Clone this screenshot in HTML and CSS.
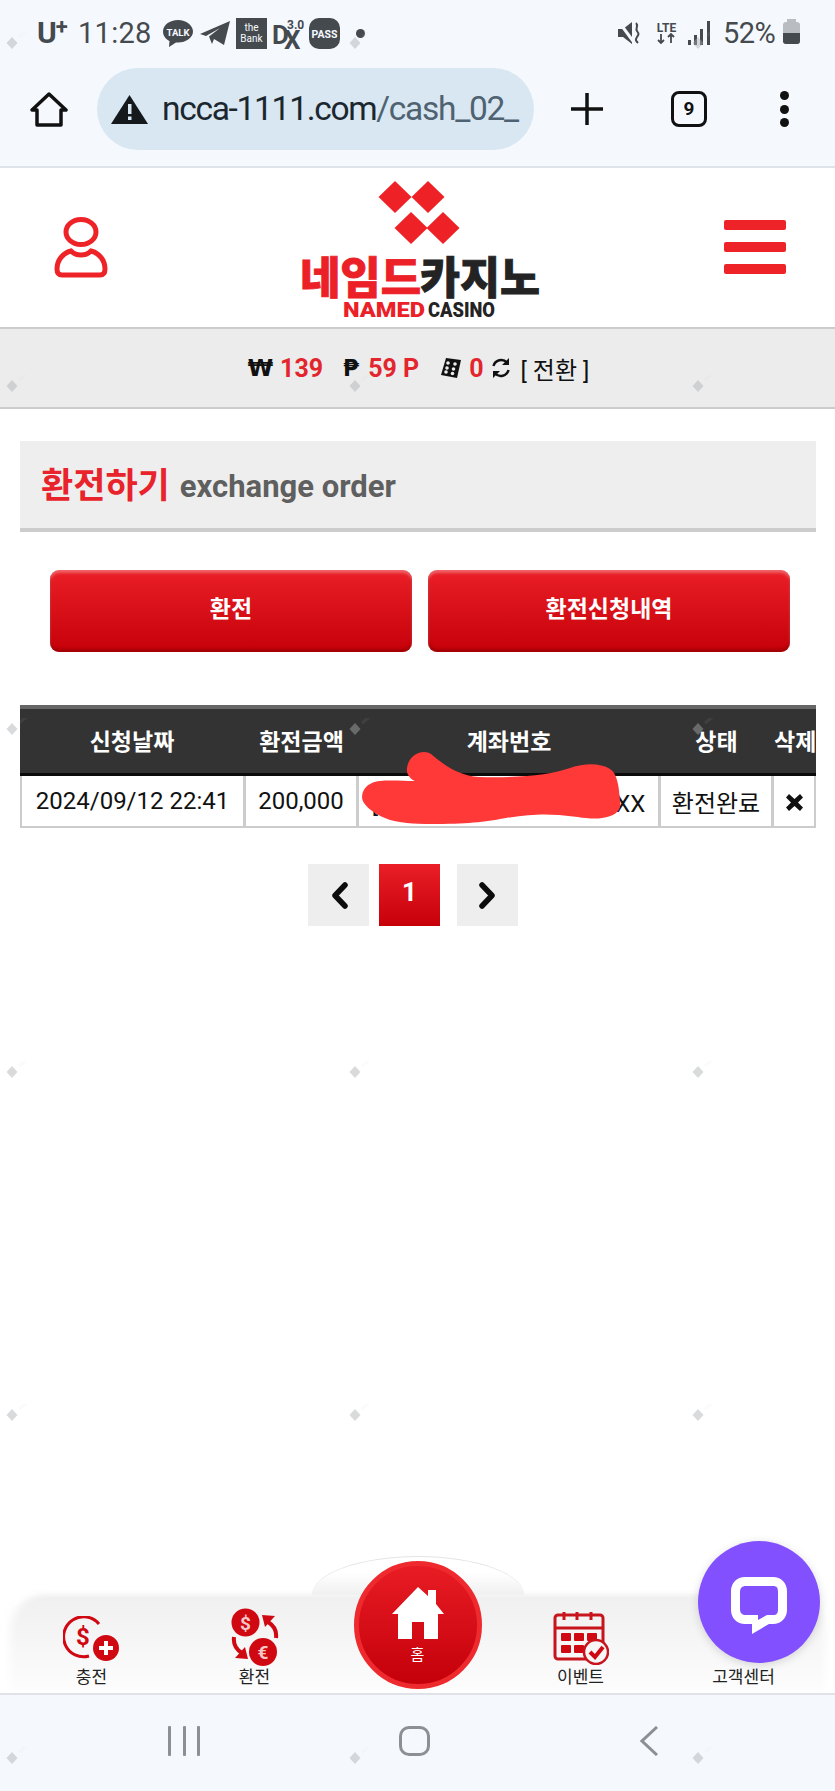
FILE: index.html
```html
<!DOCTYPE html>
<html lang="ko">
<head>
<meta charset="utf-8">
<title>환전하기 - 네임드카지노</title>
<link rel="stylesheet" href="styles.css">
</head>
<body>
<div class="page">
  <div class="chrome">
    <div class="status">
      <div class="status-left">
        <span class="carrier">U<sup>+</sup></span>
        <span class="clock">11:28</span>
        <svg class="ico-talk" viewBox="0 0 30 27"><path d="M15 0C6.700 0 0 5 0 11.500c0 4 2.500 7.500 6.500 9.500L6 27l7-4.600c.7.100 1.300.100 2 .100 8.300 0 15-5 15-11S23.300 0 15 0z"/><text x="15" y="15.500" class="t-talk">TALK</text></svg>
        <svg class="ico-tg" viewBox="0 0 30 24"><path d="M0 13 30 0 24 24 14 18 12 23 9 15.500 20 7 6 15z"/></svg>
        <svg class="ico-bank" viewBox="0 0 31 31"><rect width="31" height="31"/><text x="15.500" y="13" class="t-bank">the</text><text x="15.500" y="24" class="t-bank">Bank</text></svg>
        <svg class="ico-dx" viewBox="0 0 33 31"><text x="0" y="26" class="t-dx">D</text><text x="12" y="30.500" class="t-dx">X</text><text x="15" y="11" class="t-ver">3.0</text></svg>
        <svg class="ico-pass" viewBox="0 0 31 31"><rect width="31" height="31" rx="10"/><text x="15.500" y="20" class="t-pass">PASS</text></svg>
        <span class="status-dot"></span>
      </div>
      <div class="status-right">
        <svg class="ico-mute" viewBox="0 0 24 24"><path d="M0 8h5l9-7v22l-9-7H0z"/><path d="M1 1l14 19" class="cut"/><path d="M18 2c3 3-1 5 1 8s2 3 0 6-1 4 1 6" class="wave"/></svg>
        <svg class="ico-lte" viewBox="0 0 23 24"><text x="11.500" y="11" class="t-lte">LTE</text><path d="M6 13v9M3 19l3 3 3-3M16 22v-9M13 16l3-3 3 3" class="arrows"/></svg>
        <svg class="ico-signal" viewBox="0 0 22 24"><rect x="0" y="19" width="3" height="5"/><rect x="6" y="14" width="3" height="10"/><rect x="12" y="8" width="3" height="16"/><rect x="19" y="0" width="3" height="24"/></svg>
        <span class="battery-pct">52%</span>
        <span class="battery"><i></i></span>
      </div>
    </div>
    <div class="toolbar">
      <svg class="ico-home" viewBox="0 0 38 35"><path d="M19 2 36 18h-5v15H7V18H2z"/></svg>
      <div class="omnibox">
        <svg class="ico-warn" viewBox="0 0 37 29"><path d="M18.500 0 37 29H0z"/><rect x="17" y="9" width="3.500" height="10" class="mark"/><rect x="17" y="21.500" width="3.500" height="3.500" class="mark"/></svg>
        <span class="url">ncca-1111.com<span class="url-path">/cash_02_</span></span>
      </div>
      <svg class="ico-plus" viewBox="0 0 32 32"><path d="M16 0v32M0 16h32"/></svg>
      <span class="tabs">9</span>
      <span class="kebab"><i></i><i></i><i></i></span>
    </div>
  </div>

  <header class="site-head">
    <svg class="ico-user" viewBox="0 0 54 61"><ellipse cx="27" cy="15" rx="15" ry="12.500"/><path d="M17 34C9 36 3 43 3 52c0 4 2 6 5 6h38c3 0 5-2 5-6 0-9-6-16-14-18-3 3-6 4-10 4s-7-1-10-4z"/></svg>
    <svg class="logo" viewBox="0 0 240 138">
      <g class="logo-marks">
        <path d="M95 0l16.500 16-16.500 16-16.500-16z"/><path d="M128 0l16.500 16-16.500 16-16.500-16z"/>
        <path d="M111 31l16.500 16-16.500 16-16.500-16z"/><path d="M143 31l16.500 16-16.500 16-16.500-16z"/>
      </g>
      <text x="0" y="113" class="logo-ko red" textLength="121" lengthAdjust="spacingAndGlyphs">네임드</text>
      <text x="120" y="113" class="logo-ko dark" textLength="120" lengthAdjust="spacingAndGlyphs">카지노</text>
      <text x="43" y="136" class="logo-en red" textLength="82" lengthAdjust="spacingAndGlyphs">NAMED</text>
      <text x="128" y="136" class="logo-en dark" textLength="67" lengthAdjust="spacingAndGlyphs">CASINO</text>
    </svg>
    <div class="burger"><i></i><i></i><i></i></div>
  </header>

  <div class="wallet">
    <span class="cur">₩</span><b class="amt">139</b>
    <span class="cur cur-gap">₱</span><b class="amt">59 P</b>
    <svg class="ico-dice" viewBox="0 0 22 22"><path d="M6 1 21 3 17 21 1 18z"/><g class="pips"><circle cx="8" cy="6" r="1.800"/><circle cx="15" cy="7" r="1.800"/><circle cx="7" cy="11" r="1.800"/><circle cx="13.500" cy="12" r="1.800"/><circle cx="6" cy="15" r="1.800"/><circle cx="12.500" cy="16.500" r="1.800"/></g></svg>
    <b class="amt">0</b>
    <svg class="ico-sync" viewBox="0 0 20 20"><path d="M2.500 8A8 8 0 0 1 16 4.500"/><path d="M17.500 12A8 8 0 0 1 4 15.500"/><path d="M18 0v7h-7zM2 20v-7h7z" class="solid"/></svg>
    <span class="swap">[ 전환 ]</span>
  </div>

  <main class="content">
    <h1 class="page-title"><span class="title-ko">환전하기</span> <span class="title-en">exchange order</span></h1>

    <div class="actions">
      <a class="btn">환전</a>
      <a class="btn">환전신청내역</a>
    </div>

    <div class="history">
      <table class="history-table">
        <colgroup><col class="c-date"><col class="c-amount"><col class="c-account"><col class="c-state"><col class="c-del"></colgroup>
        <thead>
          <tr><th>신청날짜</th><th>환전금액</th><th>계좌번호</th><th>상태</th><th>삭제</th></tr>
        </thead>
        <tbody>
          <tr>
            <td>2024/09/12 22:41</td>
            <td>200,000</td>
            <td>[은행] XXXXXXXXXXXXXX</td>
            <td>환전완료</td>
            <td><svg class="ico-x" viewBox="0 0 17 17"><path d="M3 0l5.500 5L14 0l3 3.500L12 8.500l5 5-3 3.500-5.500-5L3 17l-3-3.500 5-5-5-5z"/></svg></td>
          </tr>
        </tbody>
      </table>
      <svg class="scribble" viewBox="360 749 265 78"><path d="M431 753C424 748 409 752 407 767C406 773 410 778 415 780C400 780 380 778 372 782C362 786 360 797 364 802C368 808 378 815 390 819C405 823 420 823 437 823C470 823 490 820 506 817C530 813 545 813 559 814C575 815 590 819 602 817C615 815 622 810 620 800C619 785 617 772 610 768C600 762 585 762 570 767C550 774 520 777 479 776C460 775 445 765 431 753Z"/></svg>
    </div>

    <nav class="pager">
      <a class="page-btn"><svg class="chev" viewBox="0 0 18 27"><path d="M15 3 5 13.500 15 24"/></svg></a>
      <a class="page-btn current">1</a>
      <a class="page-btn"><svg class="chev" viewBox="0 0 18 27"><path d="M3 3l10 10.500L3 24"/></svg></a>
    </nav>
  </main>

  <footer class="dock">
    <a class="dock-item">
      <svg class="ico-charge" viewBox="0 0 57 45"><path d="M36 8A20 20 0 1 0 26 40" class="ring"/><text x="20" y="29" class="t-money">$</text><circle cx="43" cy="32" r="13"/><path d="M43 25v14M36 32h14" class="plus"/></svg>
      <span>충전</span>
    </a>
    <a class="dock-item">
      <svg class="ico-exchange" viewBox="0 0 48 58"><circle cx="14.500" cy="14.500" r="14"/><text x="14.500" y="21.500" class="t-coin">$</text><circle cx="32" cy="44" r="14"/><text x="32" y="51" class="t-coin">€</text><path d="M45 30C46 22 42 17 37 14" class="arc"/><path d="M31 7 44 8 34 19z"/><path d="M3 29C2 37 6 42 11 45" class="arc"/><path d="M17 51 4 50 14 39z"/></svg>
      <span>환전</span>
    </a>
    <a class="dock-item dock-home">
      <svg class="ico-house" viewBox="0 0 52 52"><path d="M26 0 36 9V3h8v14l8 10h-6v25H32V35H20v17H6V27H0z"/></svg>
      <span>홈</span>
    </a>
    <a class="dock-item">
      <svg class="ico-cal" viewBox="0 0 56 54"><rect x="2" y="4" width="48" height="44" rx="3" class="frame"/><path d="M2 17h48" class="frame"/><path d="M11 1v8M24 1v8M38 1v8" class="frame"/><rect x="8" y="22" width="10" height="8" rx="1"/><rect x="21" y="22" width="10" height="8" rx="1"/><rect x="34" y="22" width="10" height="8" rx="1"/><rect x="8" y="34" width="10" height="8" rx="1"/><rect x="21" y="34" width="10" height="8" rx="1"/><circle cx="43" cy="41" r="12" class="badge"/><path d="M37 41l5 5 8-10" class="tick"/></svg>
      <span>이벤트</span>
    </a>
    <a class="dock-item">
      <span>고객센터</span>
    </a>
  </footer>

  <div class="sysnav">
    <span class="recents"><i></i><i></i><i></i></span>
    <span class="sys-home"></span>
    <svg class="sys-back" viewBox="0 0 18 30"><path d="M17 1 2 15l15 14"/></svg>
  </div>

  <a class="chat-fab">
    <svg viewBox="0 0 56 57"><path fill-rule="evenodd" d="M14 0h28c8 0 14 6 14 14v19c0 8-6 14-14 14H38L21 57V47h-7C6 47 0 41 0 33V14C0 6 6 0 14 0zM15 9c-4 0-6 2-6 6v17c0 4 2 6 6 6h12v5l9-5h6c4 0 5-2 5-6V15c0-4-1-6-5-6z"/></svg>
  </a>

  <svg class="stamp-layer">
    <defs>
      <pattern id="stamp" x="1" y="32" width="343" height="343" patternUnits="userSpaceOnUse">
        <path d="M11 5l5.500 6-5.500 6-5.500-6z" class="stamp-mark"/>
        <path d="M18 5 46 -18" class="stamp-line"/>
      </pattern>
    </defs>
    <rect width="100%" height="100%" fill="url(#stamp)"/>
  </svg>
</div>
</body>
</html>
```

FILE: styles.css
```css
* { box-sizing: border-box; }

html, body { margin: 0; padding: 0; }

body {
  font-family: Roboto, "Noto Sans CJK KR", sans-serif;
  color: #111;
  background: #fff;
}

a { display: block; color: inherit; text-decoration: none; }

svg { display: block; flex: none; }

/* page shell */
.page {
  position: relative;
  display: flex;
  flex-direction: column;
  height: 1791px;
  overflow: hidden;
}

/* phone status bar and browser toolbar */
.chrome {
  flex: none;
  height: 168px;
  background: #f5f9fe;
  border-bottom: 2px solid #dfe4ea;
}

.status {
  display: flex;
  justify-content: space-between;
  align-items: center;
  height: 66px;
  padding: 0 35px 0 37px;
  color: #454a4f;
}

.status-left, .status-right { display: flex; align-items: center; }

.carrier { width: 41px; font: 700 30px/1 Roboto, sans-serif; }
.carrier sup { font-size: 22px; line-height: 0; vertical-align: 9px; margin-left: -1px; }
.clock { width: 85px; font: 400 29px/1 Roboto, sans-serif; letter-spacing: .3px; }

.status svg { fill: #454a4f; }
.ico-talk { width: 30px; height: 27px; margin-right: 7px; }
.ico-tg { width: 30px; height: 24px; margin-right: 6px; }
.ico-bank { width: 31px; height: 31px; margin-right: 5px; }
.ico-dx { width: 33px; height: 31px; margin-right: 4px; }
.ico-pass { width: 31px; height: 31px; margin-right: 16px; }
.status-dot { width: 9px; height: 9px; border-radius: 50%; background: #454a4f; }

.t-talk, .t-pass, .t-bank { text-anchor: middle; fill: #f5f9fe; font-family: Roboto, sans-serif; }
.t-talk { font-size: 9.500px; font-weight: 700; }
.t-pass { font-size: 10.500px; font-weight: 700; }
.t-bank { font-size: 10px; }
.t-dx { font-size: 26px; font-weight: 700; font-family: Roboto, sans-serif; }
.t-ver { font-size: 12px; font-weight: 700; font-family: Roboto, sans-serif; }
.t-lte { text-anchor: middle; font-size: 12px; font-weight: 700; font-family: Roboto, sans-serif; }

.ico-mute { width: 24px; height: 24px; margin-right: 13px; }
.ico-mute .cut { stroke: #f5f9fe; stroke-width: 3; fill: none; }
.ico-mute .wave { stroke: #454a4f; stroke-width: 2; fill: none; }
.ico-lte { width: 23px; height: 24px; margin-right: 10px; }
.ico-lte .arrows { stroke: #454a4f; stroke-width: 1.800px; fill: none; }
.ico-signal { width: 22px; height: 24px; margin-right: 13px; }
.battery-pct { width: 60px; font: 400 29px/1 Roboto, sans-serif; letter-spacing: -.5px; }
.battery {
  position: relative;
  display: block;
  width: 17px;
  height: 22px;
  border-radius: 3px;
  background: #b9bcc0;
  overflow: visible;
}
.battery::before {
  content: "";
  position: absolute;
  left: 4px;
  top: -3px;
  width: 9px;
  height: 3px;
  background: #b9bcc0;
}
.battery i {
  position: absolute;
  left: 0;
  right: 0;
  bottom: 0;
  height: 11px;
  border-radius: 0 0 3px 3px;
  background: #454a4f;
}

.toolbar {
  display: flex;
  align-items: center;
  height: 86px;
  padding: 0 0 0 30px;
}

.ico-home { width: 38px; height: 35px; margin-right: 29px; fill: none; stroke: #111; stroke-width: 3.500px; stroke-linejoin: round; }

.omnibox {
  display: flex;
  align-items: center;
  width: 437px;
  height: 82px;
  padding-left: 14px;
  border-radius: 41px;
  background: #d8e7f1;
  margin-right: 37px;
}

.ico-warn { width: 37px; height: 29px; margin-right: 14px; fill: #15191c; }
.ico-warn .mark { fill: #d8e7f1; }

.url { font-size: 33.500px; line-height: 1; letter-spacing: -1.300px; color: #1b262e; white-space: nowrap; }
.url-path { color: #4f6272; }

.ico-plus { width: 32px; height: 32px; margin-right: 68px; fill: none; stroke: #111; stroke-width: 3.500px; stroke-linecap: round; }

.tabs {
  width: 36px;
  height: 36px;
  margin-right: 73px;
  border: 3.500px solid #111;
  border-radius: 8px;
  font: 700 19px/29px "Roboto", sans-serif;
  text-align: center;
}

.kebab { display: flex; flex-direction: column; gap: 4.500px; }
.kebab i { display: block; width: 9px; height: 9px; border-radius: 50%; background: #111; }

/* site header */
.site-head {
  flex: none;
  position: relative;
  display: flex;
  justify-content: space-between;
  align-items: center;
  height: 159px;
  padding: 0 49px 0 54px;
  background: #fff;
}

.ico-user { width: 54px; height: 61px; fill: none; stroke: #ee2328; stroke-width: 5px; }

.logo { position: absolute; left: 300px; top: 13px; width: 240px; height: 138px; }
.logo-marks { fill: #ee2127; }
.logo-ko { font-family: "Noto Sans CJK KR", sans-serif; font-size: 44px; font-weight: 900; stroke-width: .8px; }
.logo-en { font-family: Roboto, sans-serif; font-size: 21px; font-weight: 900; }
.logo .red { fill: #ec2027; stroke: #ec2027; }
.logo .dark { fill: #232323; stroke: #232323; }
.logo .logo-en { stroke: none; }

.burger { display: flex; flex-direction: column; gap: 12px; margin-top: -2px; }
.burger i { display: block; width: 62px; height: 10px; border-radius: 2px; background: #ee2328; }

/* wallet strip */
.wallet {
  flex: none;
  display: flex;
  justify-content: center;
  align-items: center;
  height: 82px;
  padding-left: 2px;
  background: #ececec;
  border-top: 2px solid #ccc;
  border-bottom: 2px solid #ccc;
  font-size: 25px;
}

.cur { margin-right: 7px; font-family: "DejaVu Sans", sans-serif; font-weight: 700; font-size: 23px; line-height: 1; }
.cur-gap { margin-left: 20px; margin-right: 9px; }
.amt { color: #e3262d; font-weight: 700; }
.ico-dice { width: 22px; height: 22px; margin: 0 7px 0 21px; fill: #111; }
.ico-dice .pips { fill: #ececec; }
.ico-sync { width: 20px; height: 20px; margin: 0 9px 0 8px; fill: none; stroke: #111; stroke-width: 2.500px; }
.ico-sync .solid { fill: #111; stroke: none; }
.swap { font-size: 24px; white-space: nowrap; }

/* main column */
.content { flex: 1; padding: 32px 19px 0 20px; background: #fff; }

.page-title {
  display: flex;
  align-items: center;
  gap: 10px;
  height: 91px;
  margin: 0;
  padding: 3px 0 0 21px;
  background: #eee;
  border-bottom: 4px solid #ccc;
  line-height: 1;
}
.title-ko { color: #e8232b; font-size: 35px; font-weight: 700; }
.title-en { color: #5f5f5f; font-size: 31px; font-weight: 700; }

.actions { display: flex; gap: 16px; margin: 38px 26px 53px 30px; }

.btn, .page-btn.current {
  color: #fff;
  background: linear-gradient(#ea1f27, #c60009);
}

.btn {
  flex: 1;
  height: 82px;
  border-radius: 9px;
  box-shadow: inset 0 3px 3px rgba(255,255,255,.3), inset 0 -3px 3px rgba(120,0,0,.45);
  font-size: 23px;
  font-weight: 700;
  line-height: 79px;
  text-align: center;
}

/* request history */
.history { position: relative; }

.history-table { width: 796px; table-layout: fixed; border-collapse: separate; border-spacing: 0; }

.c-date { width: 226px; }
.c-amount { width: 113px; }
.c-account { width: 302px; }
.c-state { width: 113px; }
.c-del { width: 42px; }

.history-table th {
  height: 71px;
  padding: 0 2px 3px 0;
  color: #fff;
  background: #333;
  border-top: 4px solid #666;
  border-bottom: 3px solid #0b0b0b;
  font-size: 23px;
  font-weight: 700;
  white-space: nowrap;
}

.history-table td {
  height: 52px;
  padding: 0;
  background: #fff;
  border-right: 3px solid #ccc;
  border-bottom: 2px solid #ccc;
  font-size: 24px;
  text-align: center;
  white-space: nowrap;
  overflow: hidden;
}
.history-table td:first-child { border-left: 2px solid #ccc; }
.history-table td:last-child { border-right: 2px solid #ccc; }

.ico-x { width: 17px; height: 17px; margin: 2px auto 0; fill: #111; }

.scribble { position: absolute; left: 340px; top: 45px; width: 265px; height: 78px; fill: #ff3838; }

.pager { display: flex; justify-content: flex-start; margin: 36px 0 0 288px; }

.page-btn {
  display: flex;
  justify-content: center;
  align-items: center;
  width: 61px;
  height: 62px;
  background: #eee;
}
.page-btn.current {
  margin: 0 17px 0 10px;
  font-size: 26px;
  font-weight: 700;
  padding-bottom: 6px;
}
.chev { width: 18px; height: 27px; fill: none; stroke: #0c0c0c; stroke-width: 5.500px; stroke-linejoin: round; stroke-linecap: round; }

/* bottom dock */
.dock {
  flex: none;
  position: relative;
  display: grid;
  grid-template-columns: repeat(5, 163px);
  grid-template-rows: 103px;
  justify-content: center;
  height: 105px;
  border-bottom: 2px solid #dfe3e8;
  border-radius: 42px 42px 0 0;
  background: linear-gradient(#efefef, #f3f3f3 30%, #fdfdfd 100%);
  box-shadow: inset 0 3px 6px #fff, inset 10px 0 10px #fff, inset -10px 0 10px #fff;
}

.dock::before {
  content: "";
  position: absolute;
  left: 312px;
  top: -34px;
  width: 212px;
  height: 38px;
  border-top: 1px solid #e4e4e4;
  border-radius: 50% 50% 0 0 / 100% 100% 0 0;
  background: linear-gradient(#fff, #fff 40%, #f0f0f0);
}

.dock-item {
  position: relative;
  display: flex;
  flex-direction: column;
  justify-content: flex-end;
  align-items: center;
  padding-bottom: 5px;
  font-size: 17px;
  line-height: 22px;
  color: #222;
}

.dock-item svg { margin-bottom: 5px; fill: #d00812; }

.ico-charge { width: 57px; height: 45px; }
.ico-charge .ring { fill: none; stroke: #d00812; stroke-width: 3px; }
.ico-charge .plus { fill: none; stroke: #fff; stroke-width: 4px; }
.t-money { text-anchor: middle; font: 700 24px Roboto, sans-serif; }
.dock-item .ico-exchange { width: 48px; height: 58px; margin-bottom: 0; }
.ico-exchange .arc { fill: none; stroke: #d00812; stroke-width: 4px; }
.t-coin { text-anchor: middle; fill: #f4c8c8; font: 700 19px Roboto, sans-serif; }
.dock-item .ico-cal { width: 56px; height: 54px; margin-bottom: 1px; }
.ico-cal .frame { fill: none; stroke: #c8141c; stroke-width: 3px; }
.ico-cal .badge { fill: #f6f6f6; stroke: #c8141c; stroke-width: 2.500px; }
.ico-cal .tick { fill: none; stroke: #d00812; stroke-width: 4px; }

.dock-home {
  align-self: end;
  justify-self: center;
  justify-content: flex-start;
  width: 128px;
  height: 128px;
  margin-bottom: 4px;
  padding: 21px 0 0;
  border: 5px solid #ee2a2e;
  border-radius: 50%;
  background: linear-gradient(#e81c24, #c4000a);
  color: #fff;
  font-size: 15px;
  line-height: 20px;
}
.dock-item .ico-house { width: 52px; height: 52px; margin: 0 0 6px; fill: #fff; }

/* system navigation */
.sysnav {
  flex: none;
  display: flex;
  align-items: center;
  height: 96px;
  padding: 0 0 4px 168px;
  background: #f5f8fd;
}

.recents { display: flex; gap: 11.500px; margin-right: 199px; }
.recents i { display: block; width: 3px; height: 30px; border-radius: 1px; background: #8a9096; }

.sys-home { width: 31px; height: 30px; margin-right: 210px; border: 3px solid #8a9096; border-radius: 10px; }

.sys-back { width: 18px; height: 30px; fill: none; stroke: #8a9096; stroke-width: 3px; }

/* floating chat button */
.chat-fab {
  position: absolute;
  left: 698px;
  top: 1541px;
  display: flex;
  justify-content: center;
  align-items: center;
  width: 122px;
  height: 122px;
  padding: 6px 0 0 0;
  border-radius: 50%;
  background: #8250ff;
  box-shadow: 0 2px 10px rgba(0,0,0,.15);
}
.chat-fab svg { width: 56px; height: 57px; fill: #fff; }

/* repeating site stamp */
.stamp-layer { position: absolute; inset: 0; width: 100%; height: 100%; pointer-events: none; }
.stamp-mark { fill: #a9adb2; opacity: .45; }
.stamp-line { fill: none; stroke: #c6c8cc; stroke-width: 3px; opacity: .08; }
```
